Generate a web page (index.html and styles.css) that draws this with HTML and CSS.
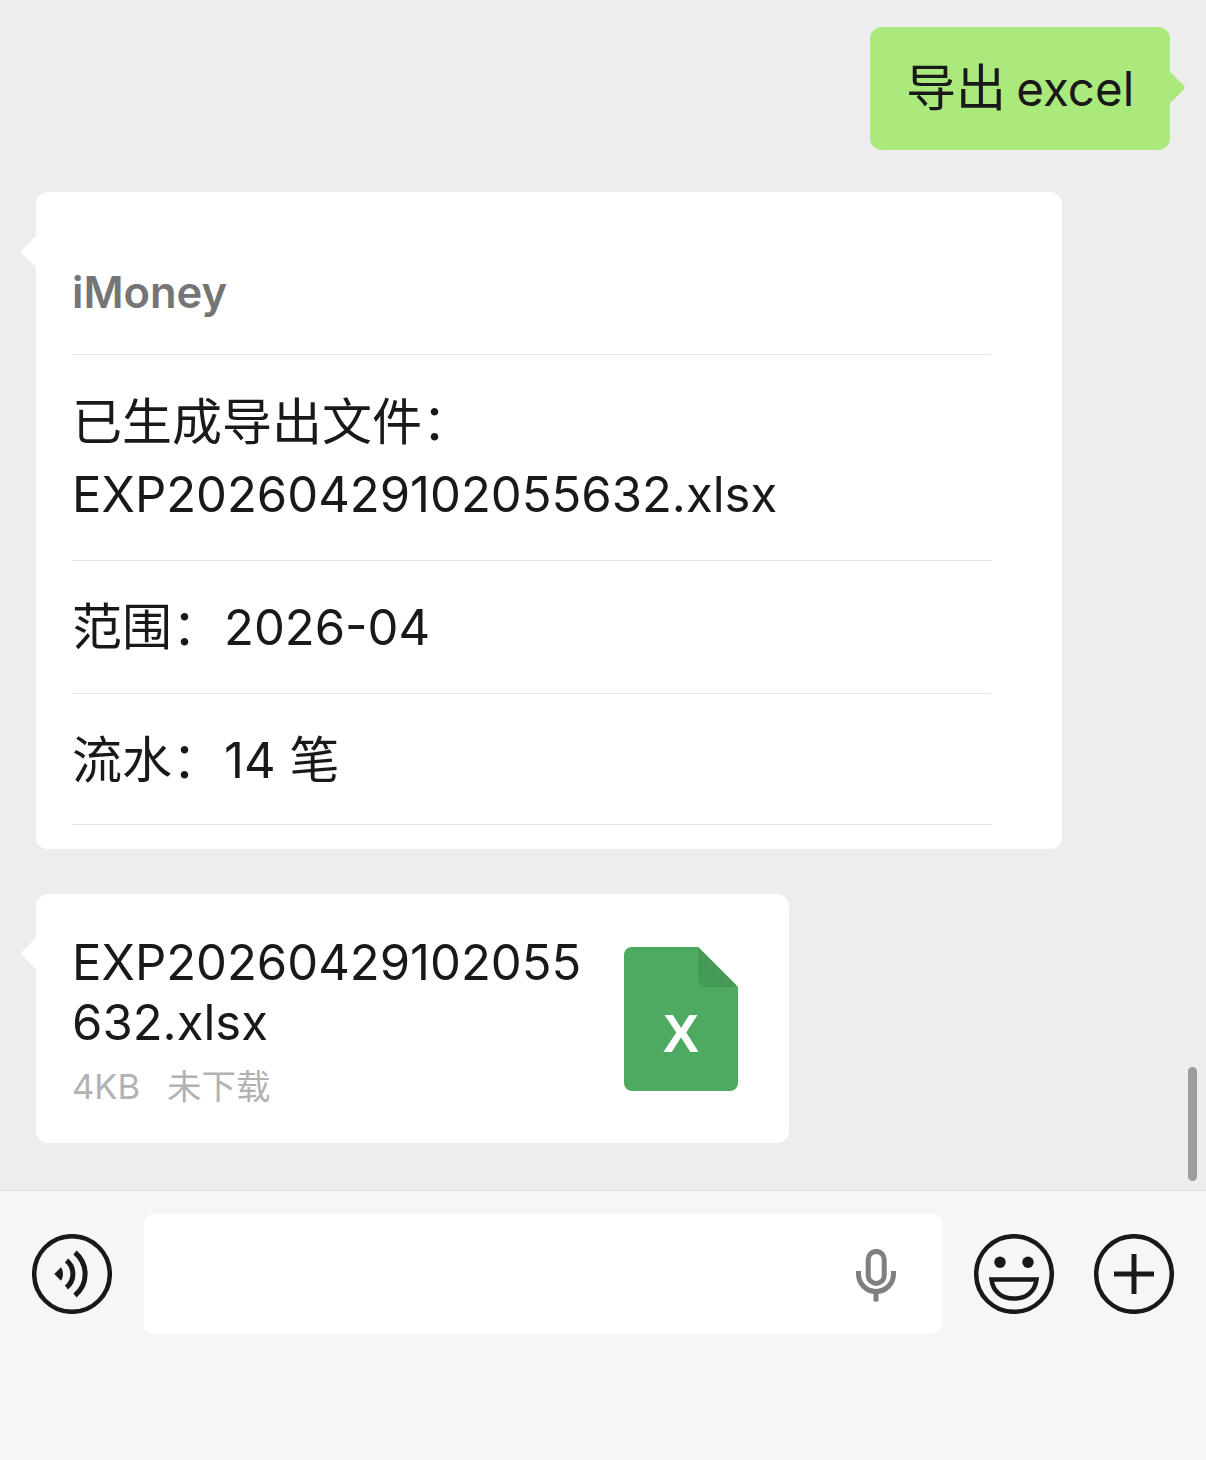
FILE: index.html
```html
<!DOCTYPE html>
<html lang="zh-CN">
<head>
<meta charset="utf-8">
<title>iMoney</title>
<link rel="stylesheet" href="styles.css">
</head>
<body>
<div class="app">
  <main class="chat">
    <div class="bubble bubble-out"><span class="han">导出</span> excel</div>

    <section class="bubble bubble-in report">
      <div class="report-row report-title">iMoney</div>
      <div class="report-row report-file"><span class="han">已生成导出文件：</span><br>EXP20260429102055632.xlsx</div>
      <div class="report-row report-range"><span class="han">范围：</span><span class="value">2026-04</span></div>
      <div class="report-row report-count"><span class="han">流水：</span><span class="value">14 <span class="han">笔</span></span></div>
    </section>

    <section class="bubble bubble-in file-card">
      <div class="file-info">
        <div class="file-name">EXP20260429102055<br>632.xlsx</div>
        <div class="file-meta"><span class="file-size">4KB</span><span>未下载</span></div>
      </div>
      <svg class="file-icon" viewBox="0 0 114 144" width="114" height="144" aria-hidden="true">
        <path class="sheet" d="M8 0H74L114 40V136a8 8 0 0 1-8 8H8a8 8 0 0 1-8-8V8a8 8 0 0 1 8-8z"/>
        <path class="sheet-fold" d="M74 0L112 38Q113 40 110 40H82a8 8 0 0 1-8-8z"/>
        <text class="sheet-letter" x="57" y="105" text-anchor="middle">X</text>
      </svg>
    </section>

    <div class="scroll-thumb"></div>
  </main>

  <footer class="composer">
    <svg class="round-icon" viewBox="0 0 80 80" width="80" height="80" aria-hidden="true">
      <circle cx="40" cy="40" r="37.8"/>
      <path class="solid" d="M22.3 40L29 33.2C31.6 37.2 31.6 42.8 29 46.8z"/>
      <path class="wave" d="M34.5 26.5C43 33.5 43 46.5 34.5 53.5"/>
      <path class="wave" d="M43 18.5C56.5 30 56.5 50 43 61.5"/>
    </svg>
    <div class="input">
      <svg class="mic" viewBox="0 0 40 54" width="40" height="54" aria-hidden="true">
        <rect x="12.2" y="2.4" width="16" height="32" rx="8"/>
        <path d="M2.5 22V25a17.5 17.5 0 0 0 35 0V22"/>
        <path class="mic-stem" d="M20 44V52.5"/>
      </svg>
    </div>
    <svg class="round-icon" viewBox="0 0 80 80" width="80" height="80" aria-hidden="true">
      <circle cx="40" cy="40" r="37.8"/>
      <circle class="solid" cx="26" cy="28.3" r="5.7"/>
      <circle class="solid" cx="54" cy="28.3" r="5.7"/>
      <path d="M17.5 45.5H62.5C61 58 52 64.5 40 64.5C28 64.5 19 58 17.5 45.5z"/>
    </svg>
    <svg class="round-icon" viewBox="0 0 80 80" width="80" height="80" aria-hidden="true">
      <circle cx="40" cy="40" r="37.8"/>
      <path class="wave" d="M20 40H60M40 20V60"/>
    </svg>
  </footer>
</div>
</body>
</html>
```

FILE: styles.css
```css
* { box-sizing: border-box; }

html, body { margin: 0; height: 100%; }

body {
  font-family: "Inter", "Noto Sans CJK SC", sans-serif;
  color: #191919;
  background: #ededed;
}

.app {
  display: flex;
  flex-direction: column;
  height: 1460px;
  overflow: hidden;
}

/* Han runs sit a touch larger than the Latin around them */
.han { font-size: 50px; }

/* Conversation */
.chat {
  position: relative;
  height: 1190px;
  padding: 27px 36px 0;
  display: flex;
  flex-direction: column;
  align-items: flex-start;
  background: #ededed;
}

.bubble {
  position: relative;
  border-radius: 12px;
  background: #fff;
}

.bubble::before {
  content: "";
  position: absolute;
  width: 23px;
  height: 23px;
  border-radius: 3px;
  background: inherit;
  transform: rotate(45deg);
}

.bubble-out {
  align-self: flex-end;
  width: 300px;
  height: 123px;
  padding-left: 36px;
  font-size: 47.5px;
  line-height: 122px;
  word-spacing: -3px;
  white-space: nowrap;
  background: #aaea7c;
}

.bubble-out::before {
  top: 49px;
  right: -11px;
}

.bubble-in::before {
  top: 48px;
  left: -11px;
}

/* Export summary card */
.report {
  width: 1026px;
  margin-top: 42px;
  padding: 0 71px 24px 36px;
  font-size: 49px;
  line-height: 72px;
}

.report-row {
  border-bottom: 1px solid #e3e3e3;
}

.report-title {
  height: 163px;
  padding-top: 64px;
  font-size: 43.5px;
  line-height: 72px;
  font-weight: 600;
  color: #757575;
}

.report-file { height: 206px; padding-top: 31px; }
.report-range { height: 133px; padding-top: 30px; }
.report-count { height: 131px; padding-top: 30px; }

.value { margin-left: 2px; }

/* Attachment card */
.file-card {
  display: flex;
  justify-content: space-between;
  align-items: flex-start;
  width: 753px;
  height: 249px;
  margin-top: 45px;
  padding: 39px 51px 0 36px;
}

.file-name {
  font-size: 49px;
  line-height: 60px;
}

.file-meta {
  margin-top: 12px;
  font-size: 34.5px;
  line-height: 44px;
  color: #b2b2b2;
}

.file-size { margin-right: 27px; }

.file-icon { margin-top: 14px; }
.sheet { fill: #4eaa61; }
.sheet-fold { fill: #459a58; }

.sheet-letter {
  font-family: "Liberation Sans", sans-serif;
  font-size: 54px;
  font-weight: 700;
  fill: #fff;
}

.scroll-thumb {
  position: absolute;
  top: 1067px;
  left: 1188px;
  width: 9px;
  height: 114px;
  border-radius: 5px;
  background: #9c9c9c;
}

/* Input bar */
.composer {
  flex: 1;
  display: flex;
  align-items: flex-start;
  padding: 23px 32px 0;
  border-top: 1px solid #dcdcdc;
  background: #f6f6f6;
}

.round-icon {
  flex: none;
  margin-top: 20px;
  fill: none;
  stroke: #191919;
  stroke-width: 4.5;
}

.round-icon .solid {
  fill: #191919;
  stroke: none;
}

.round-icon .wave { stroke-width: 5; }

.round-icon:last-child { margin-left: 40px; }

.input {
  display: flex;
  align-items: center;
  justify-content: flex-end;
  width: 798px;
  height: 120px;
  margin: 0 32px;
  padding-right: 46px;
  border-radius: 10px;
  background: #fff;
}

.mic {
  margin-top: 4px;
  fill: none;
  stroke: #7f7f7f;
  stroke-width: 5;
}

.mic .mic-stem { stroke-width: 5; }
```
